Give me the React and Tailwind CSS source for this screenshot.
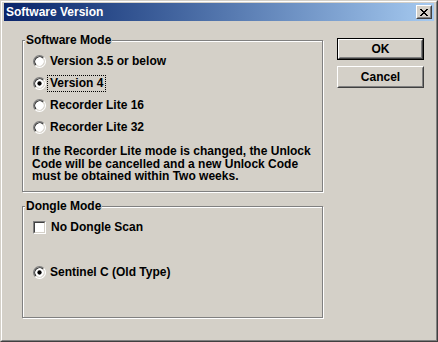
import React from 'react';

// classic sunken radio: two half-rings per edge
const Radio = ({ checked }) => (
  <svg width="13" height="13" viewBox="0 0 12 12" className="shrink-0">
    <circle cx="6" cy="6" r="5" fill="#fff" />
    <path d="M2.11 9.89A5.5 5.5 0 0 1 9.89 2.11" fill="none" stroke="#808080" strokeWidth="1" />
    <path d="M9.89 2.11A5.5 5.5 0 0 1 2.11 9.89" fill="none" stroke="#fff" strokeWidth="1" />
    <path d="M2.82 9.18A4.5 4.5 0 0 1 9.18 2.82" fill="none" stroke="#202020" strokeWidth="1" />
    <path d="M9.18 2.82A4.5 4.5 0 0 1 2.82 9.18" fill="none" stroke="#d4d0c8" strokeWidth="1" />
    {checked && <circle cx="6" cy="6" r="2" fill="#000" />}
  </svg>
);

const Checkbox = () => (
  <span className="w-[13px] h-[13px] shrink-0 border border-t-[#808080] border-l-[#808080] border-b-white border-r-white">
    <span className="block w-full h-full bg-white border border-t-[#404040] border-l-[#404040] border-b-[#d4d0c8] border-r-[#d4d0c8]" />
  </span>
);

const Option = ({ label, checked, focused }) => (
  <div className="flex items-center h-[22px] gap-[1px]">
    <Radio checked={checked} />
    <span
      className={`px-[2px] leading-[15px] border border-dotted ${focused ? 'border-black' : 'border-transparent'}`}
    >
      {label}
    </span>
  </div>
);

// etched group box, label sits on the top line
const GroupBox = ({ title, className, children }) => (
  <div
    className={`relative border border-[#808080] shadow-[inset_1px_1px_0_#fff,1px_1px_0_#fff] pl-[10px] pt-[9px] ${className}`}
  >
    <span className="absolute top-[-8px] left-[2px] px-[1px] bg-[#d4d0c8] leading-[14px]">
      {title}
    </span>
    {children}
  </div>
);

const Button = ({ label, isDefault }) => (
  <div className={`w-[87px] h-[22px] ${isDefault ? 'border border-black' : ''}`}>
    <div className="w-full h-full border border-t-white border-l-white border-r-[#404040] border-b-[#404040]">
      <div className="flex items-center justify-center w-full h-full border border-t-[#d4d0c8] border-l-[#d4d0c8] border-r-[#808080] border-b-[#808080]">
        {label}
      </div>
    </div>
  </div>
);

export default function App() {
  return (
    <div className="w-[438px] h-[342px] bg-[#d4d0c8] border border-t-[#d4d0c8] border-l-[#d4d0c8] border-r-[#404040] border-b-[#404040] font-['Liberation_Sans',Arial,sans-serif] text-[12px] font-bold text-black select-none">
      <div className="flex flex-col h-full border border-t-white border-l-white border-r-[#808080] border-b-[#808080] px-[2px] pt-[1px]">
        {/* title bar */}
        <div className="flex items-center justify-between h-[18px] pl-[2px] pr-[2px] bg-gradient-to-r from-[#0a246a] to-[#a6caf0]">
          <span className="text-white leading-[18px]">Software Version</span>
          <div className="w-[16px] h-[14px] bg-[#d4d0c8] border border-t-white border-l-white border-r-[#404040] border-b-[#404040]">
            <div className="flex items-center justify-center w-full h-full border border-t-[#d4d0c8] border-l-[#d4d0c8] border-r-[#808080] border-b-[#808080]">
              <svg width="8" height="7" viewBox="0 0 8 7" shapeRendering="crispEdges">
                <path
                  d="M0 0h2v1H0zM6 0h2v1H6zM1 1h2v1H1zM5 1h2v1H5zM2 2h4v1H2zM3 3h2v1H3zM2 4h4v1H2zM1 5h2v1H1zM5 5h2v1H5zM0 6h2v1H0zM6 6h2v1H6z"
                  fill="#000"
                />
              </svg>
            </div>
          </div>
        </div>

        {/* body */}
        <div className="flex flex-1 pl-[18px] pt-[17px]">
          <div className="flex flex-col w-[301px] mt-[2px]">
            <GroupBox title="Software Mode" className="h-[152px]">
              <Option label="Version 3.5 or below" />
              <Option label="Version 4" checked focused />
              <Option label="Recorder Lite 16" />
              <Option label="Recorder Lite 32" />
              <p className="mt-[7px] -ml-[1px] leading-[12.5px] whitespace-nowrap">
                If the Recorder Lite mode is changed, the Unlock
                <br />
                Code will be cancelled and a new Unlock Code
                <br />
                must be obtained within Two weeks.
              </p>
            </GroupBox>

            <GroupBox title="Dongle Mode" className="h-[112px] mt-[14px]">
              <div className="flex items-center h-[22px] gap-[2px]">
                <Checkbox />
                <span className="px-[3px]">No Dongle Scan</span>
              </div>
              <div className="mt-[23px]">
                <Option label="Sentinel C (Old Type)" checked />
              </div>
            </GroupBox>
          </div>

          <div className="flex flex-col gap-[6px] ml-[14px]">
            <Button label="OK" isDefault />
            <Button label="Cancel" />
          </div>
        </div>
      </div>
    </div>
  );
}
